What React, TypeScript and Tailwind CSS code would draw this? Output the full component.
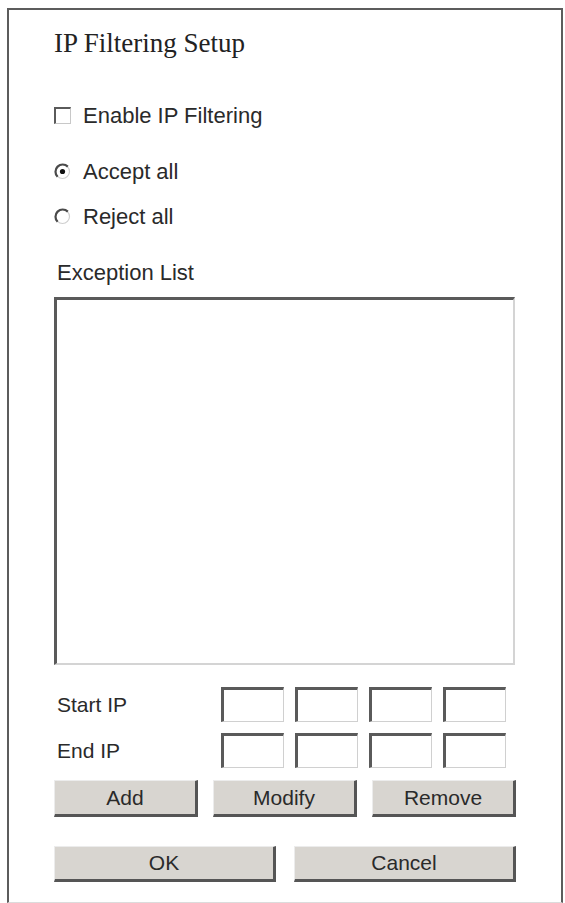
import React from "react";

const sans = { fontFamily: '"Liberation Sans", Arial, sans-serif' };

function Radio({ checked }: { checked?: boolean }) {
  return (
    <svg width="17" height="17" viewBox="0 0 17 17" className="shrink-0">
      <circle cx="8.5" cy="8.5" r="7" fill="#fff" stroke="#cfcfcf" strokeWidth="1.2" />
      <path d="M13.8 3.6 A7 7 0 0 0 3.6 13.8" fill="none" stroke="#4a4a4a" strokeWidth="2.2" />
      {checked && <circle cx="8.5" cy="8.5" r="2.6" fill="#111" />}
    </svg>
  );
}

function IpBox() {
  return (
    <div className="w-[63px] h-[35px] bg-white border-t-[3px] border-l-[3px] border-r border-b border-t-[#5a5a5a] border-l-[#5a5a5a] border-r-[#d0d0d0] border-b-[#d0d0d0]" />
  );
}

function Btn({ label, w }: { label: string; w: string }) {
  return (
    <div
      className={`${w} h-full flex items-center justify-center bg-[#d8d5d0] border-t border-l border-t-[#ececec] border-l-[#ececec] border-r-[3px] border-b-[3px] border-r-[#555] border-b-[#555] text-[21px] text-[#2a2a2a]`}
      style={sans}
    >
      {label}
    </div>
  );
}

export default function App() {
  return (
    <div className="w-[565px] h-[903px] bg-white pt-[8px] pl-[7px]">
      <div className="w-[556px] h-[895px] border-t-2 border-l-2 border-r-2 border-[#5c5c5c] border-b border-b-[#dcdcdc] pl-[45px] pt-[20px]">
        <div
          className="h-[27px] leading-[27px] text-[27px] text-[#222]"
          style={{ fontFamily: '"Liberation Serif", "Times New Roman", serif' }}
        >
          IP Filtering Setup
        </div>

        <div className="mt-[43px] h-[30px] flex items-center text-[22px] text-[#2a2a2a]" style={sans}>
          <div className="w-[17px] h-[17px] bg-white border-t-2 border-l-2 border-t-[#5a5a5a] border-l-[#5a5a5a] border-r border-b border-r-[#c8c8c8] border-b-[#c8c8c8]" />
          <span className="ml-[12px]">Enable IP Filtering</span>
        </div>

        <div className="mt-[26px] h-[30px] flex items-center text-[22px] text-[#2a2a2a]" style={sans}>
          <Radio checked />
          <span className="ml-[12px]">Accept all</span>
        </div>

        <div className="mt-[15px] h-[30px] flex items-center text-[22px] text-[#2a2a2a]" style={sans}>
          <Radio />
          <span className="ml-[12px]">Reject all</span>
        </div>

        <div className="mt-[26px] h-[30px] flex items-center text-[22px] text-[#2a2a2a] pl-[3px]" style={sans}>
          Exception List
        </div>

        <div className="mt-[10px] w-[461px] h-[368px] bg-white border-t-[3px] border-l-[3px] border-t-[#5a5a5a] border-l-[#5a5a5a] border-r-2 border-b-2 border-r-[#d4d4d4] border-b-[#d4d4d4]" />

        <div className="mt-[22px] h-[35px] flex items-center" style={sans}>
          <div className="w-[167px] pl-[3px] text-[21px] text-[#2a2a2a]">Start IP</div>
          <div className="flex gap-[11px]">
            <IpBox />
            <IpBox />
            <IpBox />
            <IpBox />
          </div>
        </div>

        <div className="mt-[11px] h-[35px] flex items-center" style={sans}>
          <div className="w-[167px] pl-[3px] text-[21px] text-[#2a2a2a]">End IP</div>
          <div className="flex gap-[11px]">
            <IpBox />
            <IpBox />
            <IpBox />
            <IpBox />
          </div>
        </div>

        <div className="mt-[12px] h-[37px] flex gap-[15px]">
          <Btn label="Add" w="w-[144px]" />
          <Btn label="Modify" w="w-[144px]" />
          <Btn label="Remove" w="w-[144px]" />
        </div>

        <div className="mt-[29px] h-[36px] flex gap-[18px]">
          <Btn label="OK" w="w-[222px]" />
          <Btn label="Cancel" w="w-[222px]" />
        </div>
      </div>
    </div>
  );
}
